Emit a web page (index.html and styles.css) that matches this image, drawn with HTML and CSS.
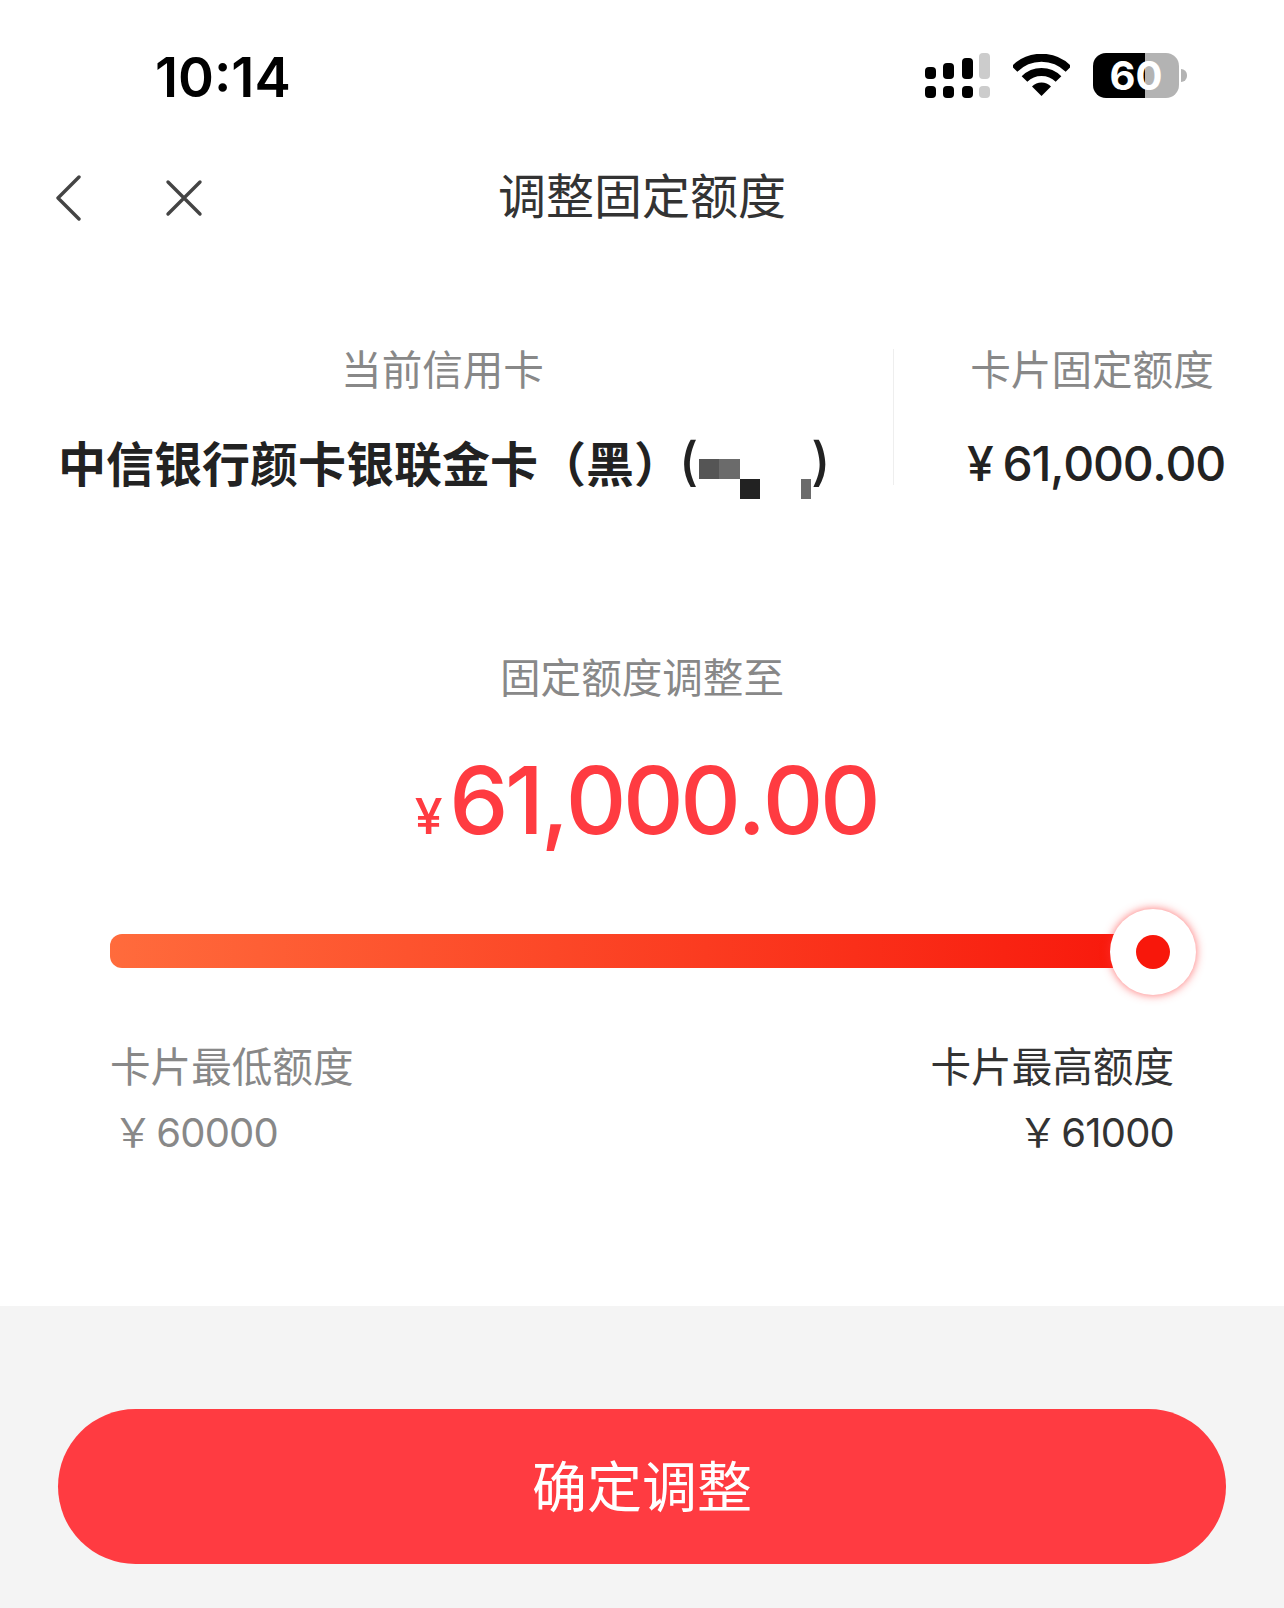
FILE: index.html
```html
<!DOCTYPE html>
<html lang="zh-CN">
<head>
    <meta charset="UTF-8">
    <meta name="viewport" content="width=device-width, initial-scale=1.0">
    <title>调整固定额度</title>
    <link rel="stylesheet" href="styles.css">
</head>
<body>
    <div class="page">
        <div class="status-bar">
            <span class="time">10:14</span>
            <div class="status-icons">
                <svg class="signal" width="65" height="45" viewBox="0 0 65 45">
                    <rect x="0" y="14" width="11" height="12" rx="4"/>
                    <rect x="18" y="10" width="11" height="16" rx="4"/>
                    <rect x="37" y="5" width="11" height="21" rx="4"/>
                    <rect x="54" y="0" width="11" height="26" rx="4" fill="#ccc"/>
                    <rect x="0" y="33" width="11" height="12" rx="4"/>
                    <rect x="18" y="33" width="11" height="12" rx="4"/>
                    <rect x="37" y="33" width="11" height="12" rx="4"/>
                    <rect x="54" y="33" width="11" height="12" rx="4" fill="#ccc"/>
                </svg>
                <svg class="wifi" width="57" height="42" viewBox="0 0 57 42">
                    <path d="M1.5 15A38 38 0 0 1 55.5 15" fill="none" stroke="#000" stroke-width="8"/>
                    <path d="M11.5 25A24 24 0 0 1 45.5 25" fill="none" stroke="#000" stroke-width="8"/>
                    <path d="M28.5 42L19 32.5A13.5 13.5 0 0 1 38 32.5Z"/>
                </svg>
                <div class="battery"><span>60</span></div>
                <div class="battery-nub"></div>
            </div>
        </div>

        <div class="nav">
            <div class="nav-icons">
                <svg width="26" height="46" viewBox="0 0 26 46">
                    <path d="M23 2L2 23L23 44" fill="none" stroke="#444" stroke-width="3.4" stroke-linecap="round" stroke-linejoin="round"/>
                </svg>
                <svg width="38" height="38" viewBox="0 0 38 38">
                    <path d="M3 3L35 35M35 3L3 35" fill="none" stroke="#444" stroke-width="3.4" stroke-linecap="round"/>
                </svg>
            </div>
            <h1 class="nav-title">调整固定额度</h1>
        </div>

        <div class="card-info">
            <div class="info-main">
                <p class="info-label info-label-top">当前信用卡</p>
                <p class="card-name">中信银行颜卡银联金卡（黑）<span class="card-mask">(<svg class="mosaic" width="112" height="40" viewBox="0 0 112 40">
                    <rect x="0" y="0" width="20" height="20" fill="#555"/>
                    <rect x="20" y="0" width="21" height="20" fill="#6b6b6b"/>
                    <rect x="41" y="20" width="20" height="20" fill="#222"/>
                    <rect x="102" y="20" width="10" height="20" fill="#6b6b6b"/>
                </svg>)</span></p>
            </div>
            <div class="info-side">
                <p class="info-label info-label-top">卡片固定额度</p>
                <p class="card-limit"><span class="yen">¥</span>61,000.00</p>
            </div>
        </div>

        <div class="adjust">
            <p class="info-label">固定额度调整至</p>
            <p class="amount"><span class="amount-yen">¥</span>61,000.00</p>
        </div>

        <div class="slider">
            <div class="slider-track"></div>
            <div class="slider-thumb"><div class="slider-dot"></div></div>
        </div>

        <div class="range">
            <div class="range-min">
                <p class="range-label">卡片最低额度</p>
                <p class="range-value"><span class="range-yen">￥</span>60000</p>
            </div>
            <div class="range-max">
                <p class="range-label">卡片最高额度</p>
                <p class="range-value"><span class="range-yen">￥</span>61000</p>
            </div>
        </div>

        <div class="footer">
            <button class="confirm">确定调整</button>
        </div>
    </div>
</body>
</html>
```

FILE: styles.css
```css
* {
    box-sizing: border-box;
}

body {
    margin: 0;
    background-color: #fff;
    font-family: Inter, 'Noto Sans CJK SC', sans-serif;
}

p, h1 {
    margin: 0;
}

.page {
    display: flex;
    flex-direction: column;
    height: 100vh;
    overflow: hidden;
}

/* status bar */
.status-bar {
    display: flex;
    justify-content: space-between;
    align-items: center;
    height: 150px;
    padding: 0 97px 0 155px;
}

.time {
    margin-top: 4px;
    font-size: 54.5px;
    font-weight: 600;
    color: #000;
}

.status-icons {
    display: flex;
    align-items: center;
}

.signal {
    margin-right: 23px;
}

.wifi {
    margin-right: 23px;
}

.battery {
    display: flex;
    align-items: center;
    justify-content: center;
    width: 86px;
    height: 45px;
    border-radius: 13px;
    background: linear-gradient(90deg, #000 60%, #b3b3b3 60%);
    color: #fff;
    font-size: 40px;
    font-weight: 700;
}

.battery-nub {
    width: 6px;
    height: 13px;
    margin-left: 2px;
    border-radius: 0 6px 6px 0;
    background-color: #b3b3b3;
}

/* nav */
.nav {
    position: relative;
    display: flex;
    align-items: center;
    justify-content: center;
    height: 86px;
}

.nav-icons {
    position: absolute;
    left: 56px;
    top: 25px;
    display: flex;
    align-items: center;
    gap: 83px;
}

.nav-title {
    font-family: 'Noto Sans CJK SC', sans-serif;
    font-size: 48px;
    font-weight: 400;
    color: #333;
}

/* card info */
.card-info {
    display: flex;
    height: 136px;
    margin-top: 113px;
    padding: 0 58px;
}

.info-main {
    width: 835px;
    padding-right: 66px;
    text-align: center;
}

.info-side {
    flex: 1;
    padding-left: 64px;
    border-left: 1px solid #eee;
    text-align: center;
}

.info-label {
    font-family: 'Noto Sans CJK SC', sans-serif;
    font-size: 40.6px;
    line-height: 44px;
    color: #888;
}

.info-label-top {
    margin-top: -3px;
}

.card-name {
    display: flex;
    align-items: center;
    height: 54px;
    margin-top: 44px;
    font-family: Inter, 'Noto Sans CJK SC', sans-serif;
    font-size: 48px;
    font-weight: 700;
    color: #222;
    white-space: nowrap;
}

.card-mask {
    display: flex;
    align-items: center;
    margin-left: -3px;
    font-size: 52px;
    font-weight: 500;
}

.mosaic {
    margin-top: 36px;
    margin-left: 1px;
}

.card-limit {
    margin-top: 47px;
    padding-left: 8px;
    font-size: 48px;
    line-height: 54px;
    font-weight: 500;
    font-kerning: none;
    letter-spacing: -1.3px;
    color: #222;
    white-space: nowrap;
}

.yen {
    margin-right: 10px;
}

/* adjust amount */
.adjust {
    margin-top: 169px;
    text-align: center;
}

.amount {
    margin-top: 45px;
    padding-left: 8px;
    font-size: 94px;
    line-height: 114px;
    font-weight: 500;
    font-kerning: none;
    letter-spacing: -3.4px;
    color: #ff3b41;
}

.amount-yen {
    margin-right: 10px;
    font-size: 50px;
}

/* slider */
.slider {
    position: relative;
    height: 34px;
    margin: 61px 88px 0 110px;
}

.slider-track {
    height: 100%;
    margin-right: 43px;
    border-radius: 12px 0 0 12px;
    background: linear-gradient(90deg, #ff6b3c, #f8170b);
}

.slider-thumb {
    position: absolute;
    right: 0;
    top: -25px;
    display: flex;
    align-items: center;
    justify-content: center;
    width: 86px;
    height: 86px;
    border-radius: 50%;
    background-color: #fff;
    box-shadow: 0 0 10px rgba(255, 50, 50, 0.7);
}

.slider-dot {
    width: 34px;
    height: 34px;
    border-radius: 50%;
    background-color: #f8170b;
}

/* min / max */
.range {
    display: flex;
    justify-content: space-between;
    margin-top: 75px;
    padding: 0 110px;
}

.range-min {
    color: #888;
}

.range-min .range-value {
    padding-left: 3px;
}

.range-max {
    color: #333;
    text-align: right;
}

.range-label {
    font-family: 'Noto Sans CJK SC', sans-serif;
    font-size: 40.6px;
    line-height: 44px;
}

.range-value {
    margin-top: 21px;
    font-size: 40px;
    line-height: 44px;
    letter-spacing: -0.8px;
}

.range-yen {
    font-family: 'Noto Sans CJK SC', sans-serif;
    margin-right: 4px;
}

/* footer */
.footer {
    flex: 1;
    margin-top: 151px;
    padding: 103px 58px 0;
    background-color: #f4f4f4;
}

.confirm {
    width: 100%;
    height: 155px;
    padding-bottom: 8px;
    border: none;
    border-radius: 78px;
    background-color: #ff3b41;
    color: #fff;
    font-family: 'Noto Sans CJK SC', sans-serif;
    font-size: 55px;
}
```
